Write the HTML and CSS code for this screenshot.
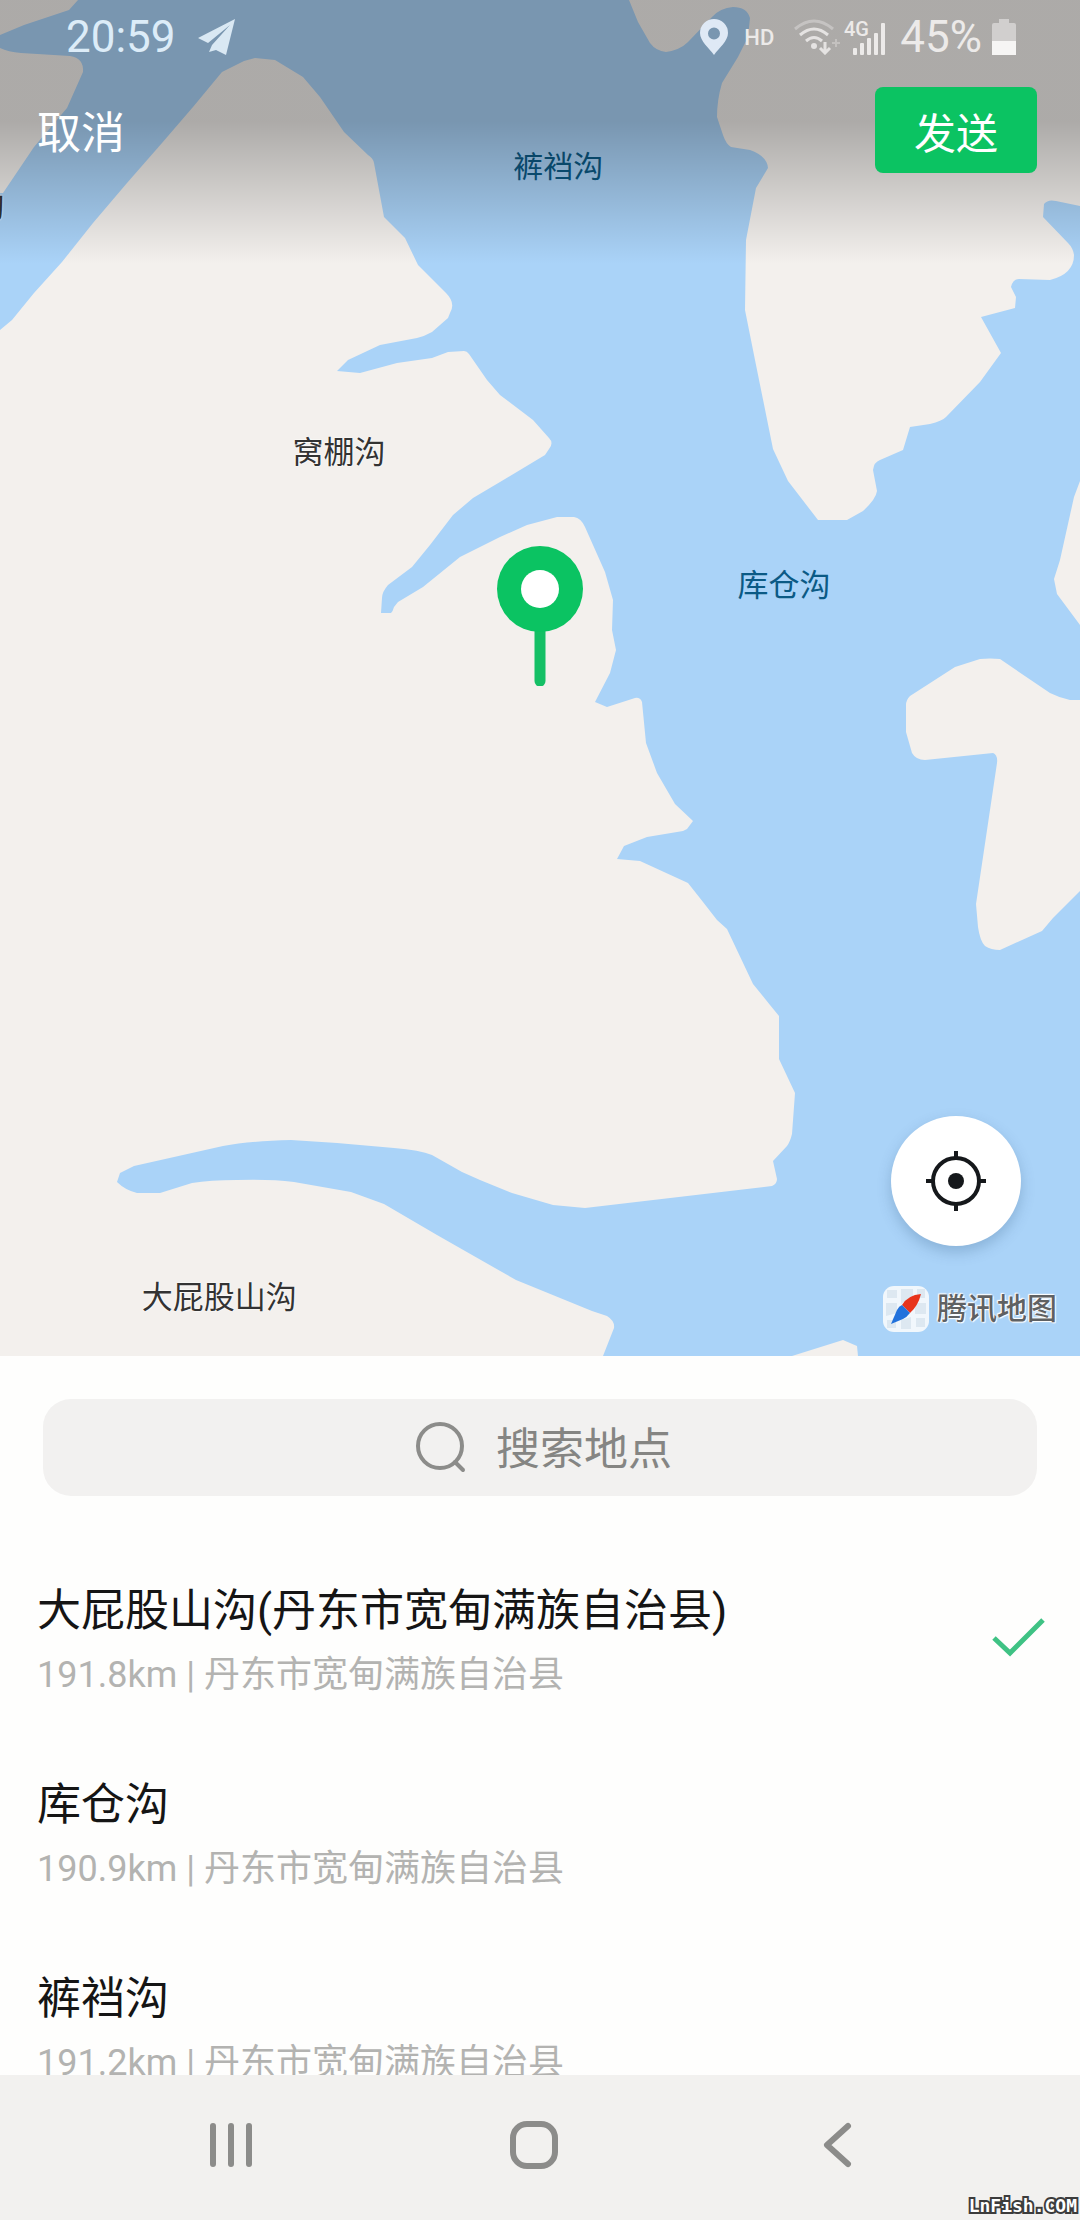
FILE: index.html
```
<!DOCTYPE html>
<html lang="zh-CN">
<head>
  <meta charset="UTF-8" />
  <meta name="viewport" content="width=device-width, initial-scale=1.0" />
  <title>发送位置</title>
  <link rel="stylesheet" href="styles.css">
</head>
<body>
  <section class="map">
    <svg class="map-tiles" viewBox="0 0 1080 1356" preserveAspectRatio="xMidYMin slice" aria-hidden="true">
      <g class="land">
        <path d="M0 0H78L69 10L24 25L0 35Z" />
        <path d="M0 48Q8 52 21 53L70 56Q84 58 83 72L67 108L34 147L3 193H0Z" />
        <path d="M0 330L12 320L34 293L62 262L93 223L127 183L162 143L193 107L222 72L244 61L255 58L275 60L303 77L320 97L344 132L368 155Q373 158 374 163L379 190L384 217L405 238L418 265L446 293Q456 303 450 313L448 318L432 332Q425 336 417 338L380 345L348 360L337 371L360 373L397 363L432 358L448 352L464 351Q467 351 469 354L487 380L500 395L533 420L549 438Q554 443 549 449L545 455L500 482L473 498L453 515L430 545L412 567L388 585Q382 592 382 598L381 613H391Q393 611 394 607L398 602L423 587L460 557L500 537L527 525L557 517H574Q581 518 585 527L605 572L613 600L612 630L616 650L610 673L595 702L607 707L635 698Q640 697 642 702L646 743L657 773L675 804L693 821L687 829L683 831L647 837L624 846L617 859L640 861L688 883L703 902L717 920L727 929L753 984L770 1005L779 1016V1059L795 1093L792 1134Q790 1142 787 1146L773 1161L777 1179Q777 1184 772 1186L585 1208L553 1205L512 1193L480 1180L462 1172L432 1155Q420 1150 394 1148L337 1143L291 1140Q250 1141 223 1146L134 1166L120 1173L117 1182Q125 1190 137 1193H160L192 1183Q210 1180 237 1180Q270 1179 294 1182L351 1192L384 1204L437 1235L516 1280L592 1311L607 1316Q615 1321 614 1328L603 1356H0Z" />
        <path d="M629 0L638 22L650 43Q656 51 666 52Q680 50 688 42L712 17Q720 8 733 7Q747 7 750 18L748 37L738 57L722 83Q717 100 717 117L723 135Q726 144 731 147L750 150Q767 156 768 168L756 188L746 240L745 310L755 360L773 449L788 481L818 520H847L863 511Q876 499 877 491L873 470Q874 462 880 460L903 450L910 427L930 424Q942 421 946 417L980 382L1001 353L981 317L1015 308L1016 297L1011 287Q1013 279 1019 279L1050 280Q1074 274 1074 255Q1073 248 1068 243L1043 217L1044 204Q1048 199 1056 201L1080 206V0Z" />
        <path d="M1080 481L1074 497L1060 560L1054 579L1057 594L1080 625Z" />
        <path d="M1080 700H1070Q1060 698 1050 693L1000 659Q990 658 980 659L955 667L910 696Q906 700 906 705V732L912 753Q916 760 925 760L993 753Q998 755 997 763L976 904L978 927Q980 941 985 946Q991 950 1000 950L1042 931L1053 918L1080 891Z" />
        <path d="M792 1356L843 1340L857 1346L858 1356Z" />
      </g>
    </svg>

    <span class="place place-edge">沟</span>
    <span class="place place-water place-kudang">裤裆沟</span>
    <span class="place place-wopeng">窝棚沟</span>
    <span class="place place-water place-kucang">库仓沟</span>
    <span class="place place-dapigu">大屁股山沟</span>

    <svg class="map-pin" viewBox="0 0 86 140" aria-hidden="true">
      <path d="M43 80V135" stroke="#14bf65" stroke-width="11" stroke-linecap="round" />
      <circle cx="43" cy="43" r="43" fill="#0bc362" />
      <circle cx="43" cy="43" r="19" fill="#fff" />
    </svg>

    <header class="top">
      <div class="status">
        <span class="clock">20:59</span>
        <svg class="plane" viewBox="0 0 38 36" fill="#d9e8f3" aria-hidden="true">
          <path d="M37 0L0 19L10 24L32 6L14 26L11 33L18 31L28 36Z" />
        </svg>
        <div class="status-right">
          <svg width="28" height="36" viewBox="0 0 28 36" aria-hidden="true">
            <path fill="#dfe9f5" fill-rule="evenodd" d="M14 0A14 14 0 0 0 0 14C0 22 9 29 14 36C19 29 28 22 28 14A14 14 0 0 0 14 0ZM14 8.500A6 6 0 1 1 14 20.500A6 6 0 1 1 14 8.500Z" />
          </svg>
          <span class="hd">HD</span>
          <svg class="wifi" width="46" height="36" viewBox="0 0 46 36" fill="none" stroke="#e5e3e2" stroke-width="3" aria-hidden="true">
            <path d="M1 10Q20 -6 39 10" opacity=".45" />
            <path d="M6 16Q20 4 34 16" />
            <path d="M12 22Q20 15 28 22" />
            <circle cx="20" cy="27" r="3" fill="#e5e3e2" stroke="none" />
            <path d="M31 23V34M26 29L31 34L36 29" />
            <path d="M38 24H46M42 20V28" opacity=".4" stroke-width="2" />
          </svg>
          <svg class="signal" width="42" height="36" viewBox="0 0 42 36" fill="#eceae9">
            <text x="0" y="17">4G</text>
            <rect x="9" y="29" width="4" height="7" rx="1" />
            <rect x="16" y="24" width="4" height="12" rx="1" />
            <rect x="23" y="19" width="4" height="17" rx="1" />
            <rect x="30" y="14" width="4" height="22" rx="1" />
            <rect x="37" y="4" width="4" height="32" rx="1" />
          </svg>
          <span class="percent">45%</span>
          <svg width="24" height="36" viewBox="0 0 24 36" aria-hidden="true">
            <path fill="#d1cfce" d="M7 0H17V4H22Q24 4 24 6V22H0V6Q0 4 2 4H7Z" />
            <rect y="22" width="24" height="14" fill="#f6f5f4" />
          </svg>
        </div>
      </div>
      <div class="actions">
        <button class="cancel" type="button">取消</button>
        <button class="send" type="button">发送</button>
      </div>
    </header>

    <button class="locate" type="button" aria-label="定位">
      <svg viewBox="0 0 60 60" fill="none" stroke="#15181b" stroke-width="4" aria-hidden="true">
        <circle cx="30" cy="30" r="23" />
        <path d="M30 0V8M30 52V60M0 30H8M52 30H60" />
        <circle cx="30" cy="30" r="8" fill="#15181b" stroke="none" />
      </svg>
    </button>

    <div class="brand">
      <svg viewBox="0 0 46 46" aria-hidden="true">
        <rect width="46" height="46" rx="11" fill="#f1f7fc" />
        <path fill="#dde8f1" d="M4 4H14V12H4ZM18 3H30V10L18 18ZM34 3H42V12H34ZM3 17H14V27L3 30ZM18 34L28 31V43H18ZM32 17H43V28H32ZM33 32H42V41H33ZM4 34H13V42H4Z" />
        <path fill="#e8341c" d="M38 8Q25 9 19 19L27 27Q35 20 38 8Z" />
        <path fill="#2272dc" d="M8 38L14 24Q16 20 19 19L27 27Q24 31 20 33Z" />
      </svg>
      <span>腾讯地图</span>
    </div>
  </section>

  <main class="sheet">
    <label class="search">
      <svg viewBox="0 0 52 52" fill="none" stroke="#8c8c8a" stroke-width="4" stroke-linecap="round" aria-hidden="true">
        <circle cx="26" cy="24" r="22" />
        <path d="M41 40L49 48" />
      </svg>
      <input type="text" placeholder="搜索地点" aria-label="搜索地点" />
    </label>

    <ul class="results">
      <li class="result">
        <div class="result-text">
          <h2>大屁股山沟(丹东市宽甸满族自治县)</h2>
          <p>191.8km | 丹东市宽甸满族自治县</p>
        </div>
        <svg class="check" viewBox="0 0 54 40" fill="none" stroke="#3fc284" stroke-width="5" aria-hidden="true">
          <path d="M2 20L18 35L51 2" />
        </svg>
      </li>
      <li class="result">
        <div class="result-text">
          <h2>库仓沟</h2>
          <p>190.9km | 丹东市宽甸满族自治县</p>
        </div>
      </li>
      <li class="result">
        <div class="result-text">
          <h2>裤裆沟</h2>
          <p>191.2km | 丹东市宽甸满族自治县</p>
        </div>
      </li>
    </ul>
  </main>

  <nav class="navbar">
    <button type="button" aria-label="最近任务">
      <svg viewBox="0 0 50 50"><path d="M7 6V44M25 6V44M43 6V44" /></svg>
    </button>
    <button type="button" aria-label="主屏幕">
      <svg viewBox="0 0 50 50"><rect x="4" y="4" width="42" height="42" rx="14" /></svg>
    </button>
    <button type="button" aria-label="返回">
      <svg viewBox="0 0 50 50"><path d="M36 6L15 25L36 44" /></svg>
    </button>
    <span class="watermark">LnFish.COM</span>
  </nav>
</body>
</html>
```
FILE: styles.css
```
:root {
  --water: #aad3f8;
  --land: #f3f0ed;
  --green: #0bc362;
  --bar-bg: #f2f1ef;
  --icon-gray: #8c8c8a;
}

* {
  box-sizing: border-box;
}

body {
  font-family: Roboto, "Noto Sans CJK SC", sans-serif;
  margin: 0;
  height: 100vh;
  display: flex;
  flex-direction: column;
  overflow: hidden;
  background-color: #fefefd;
  color: #151515;
}

button {
  font-family: inherit;
  border: none;
  padding: 0;
  background: none;
  cursor: pointer;
}

svg {
  display: block;
  flex-shrink: 0;
}

/* map */
.map {
  position: relative;
  flex-shrink: 0;
  aspect-ratio: 1080 / 1356;
  overflow: hidden;
  background-color: var(--water);
}

.map-tiles {
  width: 100%;
  height: 100%;
}

.land {
  fill: var(--land);
}

.place {
  position: absolute;
  transform: translate(-50%, -50%);
  font-size: 31px;
  line-height: 40px;
  white-space: nowrap;
  color: #333;
  text-shadow: 0 0 2px #fff, 0 0 2px #fff;
}

.place-water {
  color: #0b5a85;
  text-shadow: none;
}

.place-edge { left: -1%; top: 15.3%; }
.place-kudang { left: 51.7%; top: 12.3%; font-size: 30px; }
.place-wopeng { left: 31.4%; top: 33.4%; }
.place-kucang { left: 72.6%; top: 43.2%; }
.place-dapigu { left: 20.3%; top: 95.7%; }

/* the tip of the pin marks the middle of the map */
.map-pin {
  position: absolute;
  left: 50%;
  top: 50%;
  width: 86px;
  height: 140px;
  margin-top: -132px;
  transform: translateX(-50%);
}

.top {
  position: absolute;
  top: 0;
  left: 0;
  right: 0;
  height: 264px;
  background: linear-gradient(rgba(0, 0, 0, 0.29) 46%, rgba(0, 0, 0, 0));
}

.status {
  display: flex;
  align-items: center;
  height: 74px;
  padding: 0 64px 0 66px;
  font-size: 44px;
  color: #dcecf8;
}

.plane {
  width: 38px;
  height: 36px;
  margin-left: 22px;
}

.status-right {
  display: flex;
  align-items: center;
  margin-left: auto;
  color: #eceae9;
}

.hd {
  margin-left: 16px;
  font-size: 22px;
  font-weight: 500;
}

.wifi {
  margin-left: 20px;
}

.signal {
  overflow: visible;
  margin-left: 4px;
  font-size: 20px;
  font-weight: 500;
}

.percent {
  margin: 0 10px 0 14px;
}

.actions {
  display: flex;
  align-items: center;
  justify-content: space-between;
  padding: 13px 43px 0 37px;
}

.cancel,
.send {
  height: 86px;
  font-size: 42px;
  color: #fff;
}

.cancel {
  font-size: 44px;
}

.send {
  width: 162px;
  border-radius: 8px;
  background-color: var(--green);
}

.locate {
  position: absolute;
  right: 59px;
  bottom: 110px;
  width: 130px;
  height: 130px;
  border-radius: 50%;
  background-color: #fff;
  box-shadow: 0 6px 14px rgba(40, 80, 120, 0.25);
  display: flex;
  align-items: center;
  justify-content: center;
}

.locate svg {
  width: 60px;
  height: 60px;
}

.brand {
  position: absolute;
  right: 23px;
  bottom: 24px;
  display: flex;
  align-items: center;
  gap: 8px;
  font-size: 30px;
  font-weight: 500;
  line-height: 46px;
  color: #5f6163;
  text-shadow: 0 0 2px #fff, 0 0 2px #fff, 1px 1px 1px #fff, -1px -1px 1px #fff;
}

.brand svg {
  width: 46px;
  height: 46px;
}

/* place list */
.sheet {
  flex: 1;
  min-height: 0;
  overflow: hidden;
  padding-top: 43px;
}

.search {
  display: flex;
  align-items: center;
  justify-content: center;
  gap: 30px;
  height: 97px;
  margin: 0 43px;
  padding-left: 6px;
  border-radius: 28px;
  background-color: #f2f1f0;
}

.search svg {
  width: 52px;
  height: 52px;
}

.search input {
  width: 4em;
  padding: 4px 0 0;
  border: none;
  outline: none;
  background: none;
  font-family: inherit;
  font-size: 44px;
}

.search input::placeholder {
  color: #858583;
}

.results {
  list-style: none;
  margin: 45px 0 0;
  padding: 0;
}

.result {
  display: flex;
  align-items: center;
  justify-content: space-between;
  height: 194px;
  padding: 0 34px 0 37px;
}

.result h2 {
  margin: 0 0 6px;
  font-size: 44px;
  font-weight: 400;
  line-height: 68px;
}

.result p {
  margin: 0;
  font-size: 36px;
  line-height: 48px;
  color: #b3b3b1;
}

.check {
  width: 54px;
  height: 40px;
}

/* system navigation */
.navbar {
  position: relative;
  flex-shrink: 0;
  display: flex;
  align-items: center;
  height: 145px;
  padding: 0 92px 6px 80px;
  background-color: var(--bar-bg);
}

.navbar button {
  flex: 1;
  display: flex;
  justify-content: center;
}

.navbar svg {
  width: 50px;
  height: 50px;
  fill: none;
  stroke: var(--icon-gray);
  stroke-width: 6px;
  stroke-linecap: round;
  stroke-linejoin: round;
}

.watermark {
  position: absolute;
  right: 3px;
  bottom: 4px;
  font-family: "DejaVu Sans Mono", monospace;
  font-size: 18px;
  font-weight: 700;
  line-height: 20px;
  color: #fff;
  -webkit-text-stroke: 4px #3c3c3c;
  paint-order: stroke fill;
}
```
